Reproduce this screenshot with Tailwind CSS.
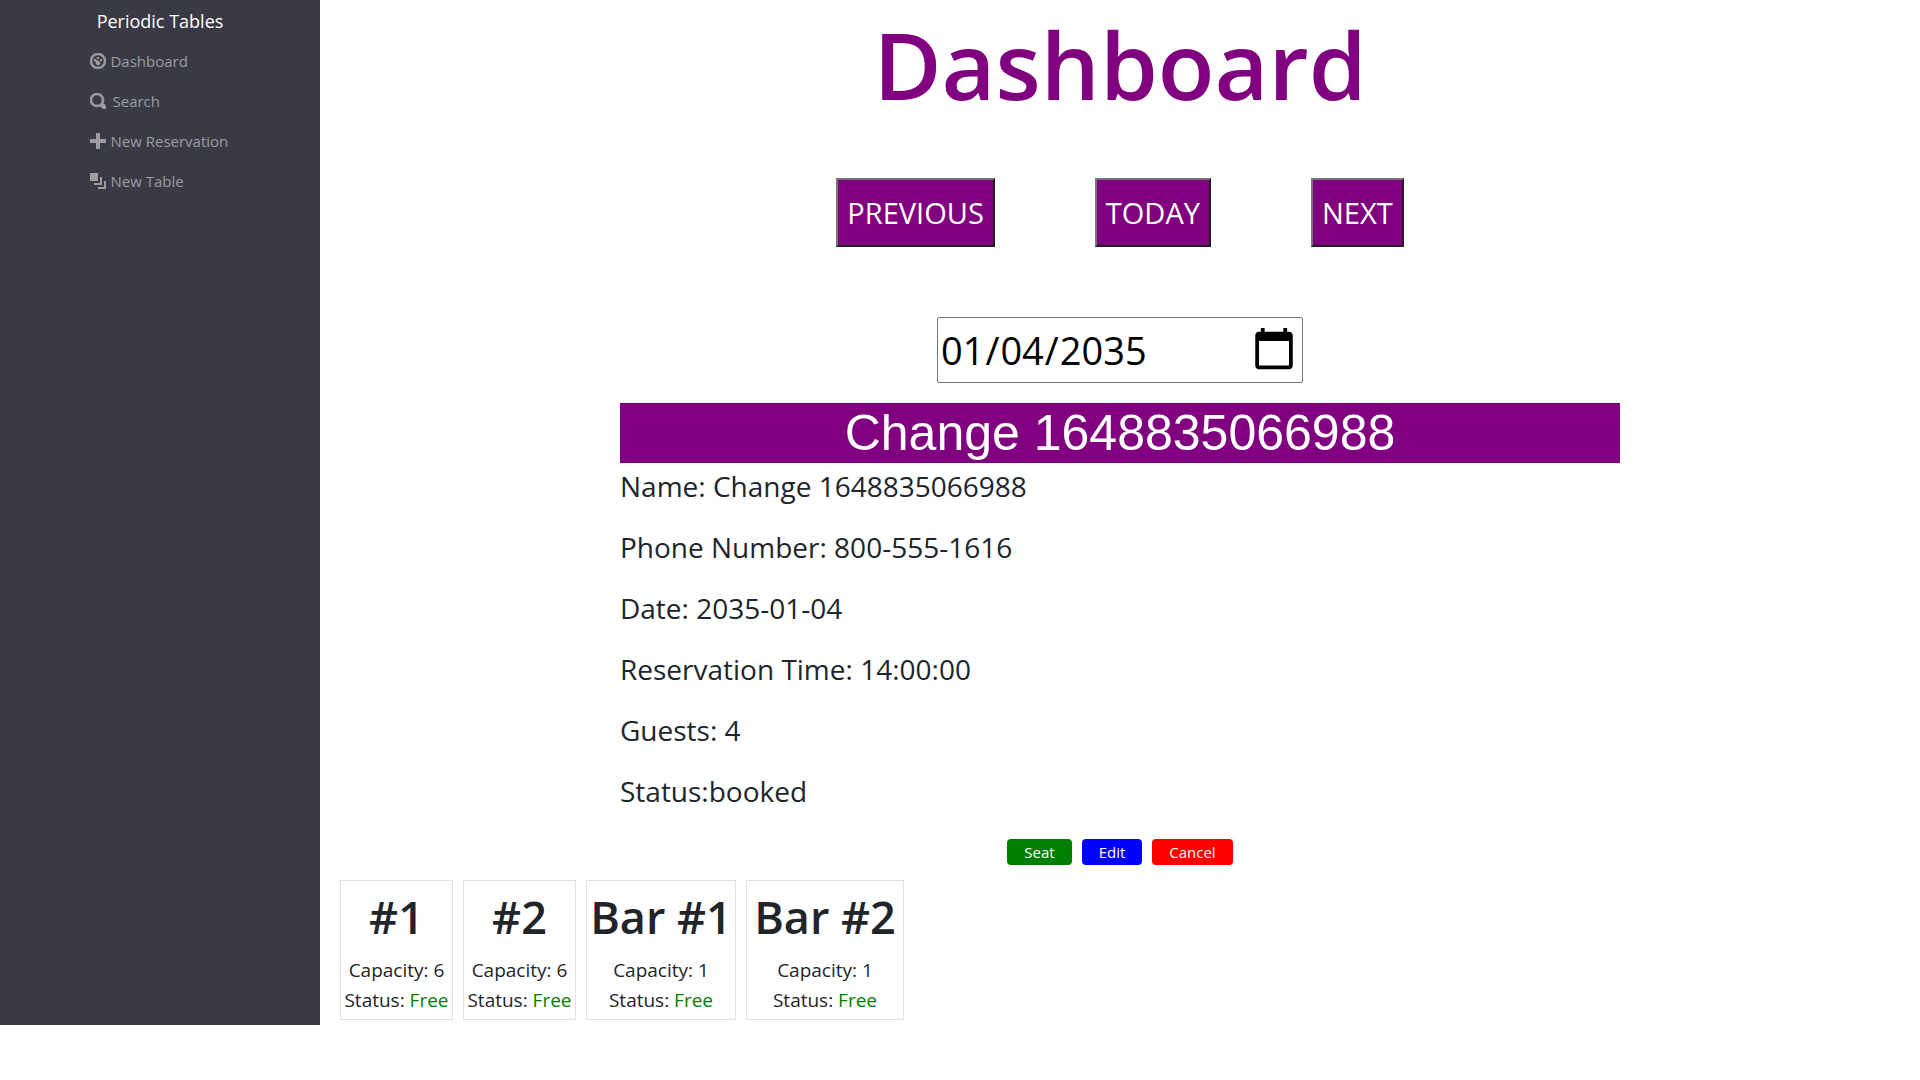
<!DOCTYPE html>
<html lang="en-US">
<head>
<meta charset="utf-8">
<title>Periodic Tables</title>
<meta name="viewport" content="width=device-width, initial-scale=1">
<script src="https://cdn.jsdelivr.net/npm/@tailwindcss/browser@4"></script>
</head>
<body class="bg-white font-['Open_Sans',sans-serif] text-[#212529]">
<div class="flex">
  <nav class="flex w-1/6 shrink-0 flex-col items-center bg-[#3a3a44] pt-px text-[15px] leading-6 text-[#9c9ca1]">
    <a href="#" class="flex h-10 items-center text-[18px] text-white">Periodic Tables</a>
    <ul class="w-[139px] whitespace-nowrap">
      <li><a href="#" class="flex h-10 items-center gap-1"><svg class="size-4 shrink-0 fill-current" viewBox="0 0 8 8" aria-hidden="true"><path d="M4 0c-2.2 0-4 1.8-4 4s1.8 4 4 4 4-1.8 4-4-1.8-4-4-4zm0 1c1.66 0 3 1.34 3 3s-1.34 3-3 3-3-1.34-3-3 1.34-3 3-3zm0 1c-.28 0-.5.22-.5.5s.22.5.5.5.5-.22.5-.5-.22-.5-.5-.5zm-1.66 1a.5.5 0 0 0-.19.84l.91.91c-.02.08-.06.16-.06.25 0 .55.45 1 1 1s1-.45 1-1-.45-1-1-1c-.09 0-.17.04-.25.06l-.91-.91a.5.5 0 0 0-.44-.16.5.5 0 0 0-.06 0zm3.16 0c-.28 0-.5.22-.5.5s.22.5.5.5.5-.22.5-.5-.22-.5-.5-.5z" stroke="currentColor" stroke-width=".3"/></svg>Dashboard</a></li>
      <li><a href="#" class="flex h-10 items-center gap-1.5"><svg class="size-4 shrink-0 fill-current" viewBox="0 0 8 8" aria-hidden="true"><path d="M3.5 0c-1.93 0-3.5 1.57-3.5 3.5s1.57 3.5 3.5 3.5c.59 0 1.17-.14 1.66-.41a1 1 0 0 0 .13.13l1 1a1.02 1.02 0 1 0 1.44-1.44l-1-1a1 1 0 0 0-.16-.13c.27-.49.44-1.06.44-1.66 0-1.93-1.55-3.5-3.5-3.5zm0 1c1.39 0 2.5 1.11 2.5 2.5 0 .66-.24 1.27-.66 1.72l-.03.03a1 1 0 0 0-.13.13c-.44.4-1.04.63-1.69.63-1.39 0-2.5-1.11-2.5-2.5s1.11-2.5 2.5-2.5z" stroke="currentColor" stroke-width=".3"/></svg>Search</a></li>
      <li><a href="#" class="flex h-10 items-center gap-1"><svg class="size-4 shrink-0 fill-current" viewBox="0 0 8 8" aria-hidden="true"><path d="M3 0v3h-3v2h3v3h2v-3h3v-2h-3v-3h-2z"/></svg>New Reservation</a></li>
      <li><a href="#" class="flex h-10 items-center gap-1"><svg class="size-4 shrink-0 fill-current" viewBox="0 0 8 8" aria-hidden="true"><path d="M0 0v4h4v-4h-4zm5 2v3h-3v1h4v-4h-1zm2 2v3h-3v1h4v-4h-1z"/></svg>New Table</a></li>
    </ul>
  </nav>
  <main class="min-w-0 flex-1 px-5 pb-[5px]">
    <h1 class="text-center text-[93px] leading-[128px] font-semibold text-[#800080]">Dashboard</h1>
    <div class="mt-[50px] flex justify-center gap-[100px] text-[29px] leading-[45px] text-white">
      <button type="button" class="border-2 border-t-[#767676] border-r-[#212121] border-b-[#212121] border-l-[#767676] bg-[#800080] px-[9px] py-2.5">PREVIOUS</button>
      <button type="button" class="border-2 border-t-[#767676] border-r-[#212121] border-b-[#212121] border-l-[#767676] bg-[#800080] px-[9px] py-2.5">TODAY</button>
      <button type="button" class="border-2 border-t-[#767676] border-r-[#212121] border-b-[#212121] border-l-[#767676] bg-[#800080] px-[9px] py-2.5">NEXT</button>
    </div>
    <div class="mt-[70px] flex justify-center">
      <input type="date" aria-label="Reservation date" value="2035-01-04" class="h-[66px] w-[366px] rounded-xs border border-[#767676] bg-white px-0.5 text-[38px] text-black [&::-webkit-calendar-picker-indicator]:size-[48px]">
    </div>
    <section class="mx-auto mt-5 max-w-[1000px] text-[28px] leading-[45px]">
      <h2 class="bg-[#800080] text-center font-['Liberation_Sans',sans-serif] text-[50px] leading-[60px] text-white">Change 1648835066988</h2>
      <div class="flex flex-col gap-4 pt-px">
        <p>Name: Change 1648835066988</p>
        <p>Phone Number: 800-555-1616</p>
        <p>Date: 2035-01-04</p>
        <p>Reservation Time: 14:00:00</p>
        <p>Guests: 4</p>
        <p>Status:booked</p>
      </div>
      <div class="mt-[25px] flex justify-center gap-2.5 text-[15px] leading-[26px] text-white">
        <button type="button" class="rounded bg-[#008000] px-[17px]">Seat</button>
        <button type="button" class="rounded bg-[#0000ff] px-[17px]">Edit</button>
        <button type="button" class="rounded bg-[#ff0000] px-[17px]">Cancel</button>
      </div>
    </section>
    <div class="mt-[15px] grid grid-cols-[113px_113px_150px_158px] gap-2.5 text-center text-[19px] leading-[30px] whitespace-nowrap">
      <article class="border border-[#dee2e6] px-0.5 pt-1.5 pb-1"><h2 class="mb-2 text-[45px] leading-[60px] font-semibold">#1</h2><p>Capacity: 6</p><p>Status: <span class="text-[#008000]">Free</span></p></article>
      <article class="border border-[#dee2e6] px-0.5 pt-1.5 pb-1"><h2 class="mb-2 text-[45px] leading-[60px] font-semibold">#2</h2><p>Capacity: 6</p><p>Status: <span class="text-[#008000]">Free</span></p></article>
      <article class="border border-[#dee2e6] px-0.5 pt-1.5 pb-1"><h2 class="mb-2 text-[45px] leading-[60px] font-semibold">Bar #1</h2><p>Capacity: 1</p><p>Status: <span class="text-[#008000]">Free</span></p></article>
      <article class="border border-[#dee2e6] px-0.5 pt-1.5 pb-1"><h2 class="mb-2 text-[45px] leading-[60px] font-semibold">Bar #2</h2><p>Capacity: 1</p><p>Status: <span class="text-[#008000]">Free</span></p></article>
    </div>
  </main>
</div>
</body>
</html>
